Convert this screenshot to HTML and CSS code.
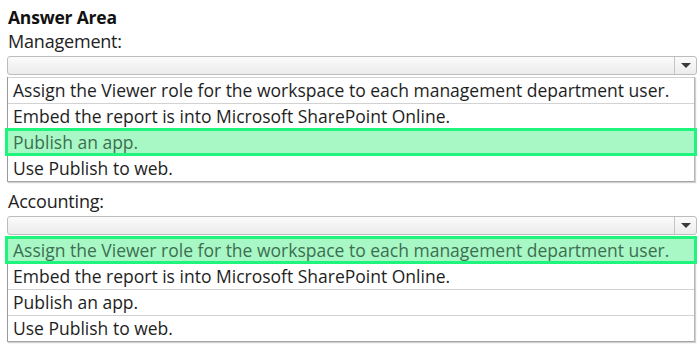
FILE: index.html
```html
<!DOCTYPE html>
<html>
<head>
<meta charset="utf-8">
<link rel="stylesheet" href="styles.css">
</head>
<body>
<div class="area">
  <div class="title">Answer Area</div>
  <section class="group">
    <div class="label">Management:</div>
    <div class="select"><span class="select-value"></span><span class="select-btn"><span class="arrow"></span></span></div>
    <ul class="options">
      <li class="opt">Assign the Viewer role for the workspace to each management department user.</li>
      <li class="opt">Embed the report is into Microsoft SharePoint Online.</li>
      <li class="opt picked">Publish an app.</li>
      <li class="opt">Use Publish to web.</li>
    </ul>
  </section>
  <section class="group">
    <div class="label">Accounting:</div>
    <div class="select"><span class="select-value"></span><span class="select-btn"><span class="arrow"></span></span></div>
    <ul class="options">
      <li class="opt picked">Assign the Viewer role for the workspace to each management department user.</li>
      <li class="opt">Embed the report is into Microsoft SharePoint Online.</li>
      <li class="opt">Publish an app.</li>
      <li class="opt">Use Publish to web.</li>
    </ul>
  </section>
</div>
</body>
</html>
```
FILE: styles.css
```css
html, body {
  margin: 0;
  padding: 0;
  background: #ffffff;
}
body {
  font-family: "Open Sans", "Noto Sans", sans-serif;
  color: #1a1a1a;
}
.area {
  width: 690px;
  padding: 6px 3px 0 7px;
  display: flex;
  flex-direction: column;
}
.title {
  font-weight: bold;
  font-size: 17.5px;
  line-height: 23px;
  padding-left: 1px;
  color: #111;
  letter-spacing: -0.2px;
}
.group {
  display: flex;
  flex-direction: column;
  margin-bottom: 7px;
}
.label {
  font-size: 18px;
  line-height: 24px;
  padding-left: 1px;
  color: #222;
  letter-spacing: -0.2px;
}
.select {
  display: flex;
  height: 17px;
  margin-top: 3px;
  border: 1px solid #bdbdbd;
  border-radius: 3px;
  background: linear-gradient(#fbfbfb, #ececec);
}
.select-value {
  flex: 1;
}
.select-btn {
  width: 21px;
  border-left: 1px solid #c6c6c6;
  display: flex;
  align-items: center;
  justify-content: center;
}
.arrow {
  width: 0;
  height: 0;
  border-left: 5px solid transparent;
  border-right: 5px solid transparent;
  border-top: 5px solid #3a3a3a;
}
.options {
  list-style: none;
  margin: 2px 2px 0 0;
  padding: 0;
  border-left: 1px solid #9a9a9a;
  border-right: 1px solid #b5b5b5;
  border-bottom: 1px solid #a5a5a5;
  box-shadow: 1px 1px 1px #d0d0d0;
}
.opt {
  height: 25px;
  line-height: 25px;
  font-size: 17.5px;
  padding-left: 5px;
  border-top: 1px solid #d2d2d2;
  color: #1e1e1e;
  white-space: nowrap;
}
.opt.picked {
  position: relative;
  background: #a8f8c6;
  color: #3d6e50;
  outline: 3px solid #1ff57c;
  outline-offset: -2px;
  margin-left: -2px;
  margin-right: -2px;
  padding-left: 7px;
  z-index: 1;
}
```
